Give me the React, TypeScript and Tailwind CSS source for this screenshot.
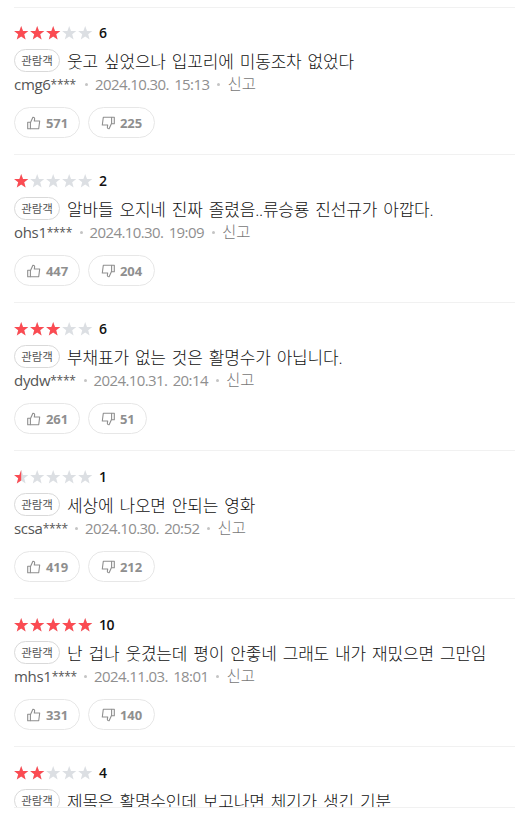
import React from "react";

type Review = {
  score: number;
  text: string;
  user: string;
  userClass: string;
  date: string;
  up?: number;
  down?: number;
};

const reviews: Review[] = [
  { score: 6, text: "웃고 싶었으나 입꼬리에 미동조차 없었다", user: "cmg6", userClass: "w-[81px]", date: "2024.10.30. 15:13", up: 571, down: 225 },
  { score: 2, text: "알바들 오지네 진짜 졸렸음..류승룡 진선규가 아깝다.", user: "ohs1", userClass: "w-[75.5px]", date: "2024.10.30. 19:09", up: 447, down: 204 },
  { score: 6, text: "부채표가 없는 것은 활명수가 아닙니다.", user: "dydw", userClass: "w-[79.5px]", date: "2024.10.31. 20:14", up: 261, down: 51 },
  { score: 1, text: "세상에 나오면 안되는 영화", user: "scsa", userClass: "w-[71px]", date: "2024.10.30. 20:52", up: 419, down: 212 },
  { score: 10, text: "난 겁나 웃겼는데 평이 안좋네 그래도 내가 재밌으면 그만임", user: "mhs1", userClass: "w-[80px]", date: "2024.11.03. 18:01", up: 331, down: 140 },
  { score: 4, text: "제목은 활명수인데 보고나면 체기가 생긴 기분", user: "", userClass: "", date: "" },
];

const STAR = "M7.2 0 L9 4.9 L14.3 5.1 L10.2 8.3 L11.6 13.4 L7.2 10.6 L2.8 13.4 L4.2 8.3 L0.1 5.1 L5.4 4.9 Z";
const HALF_STAR = "M7.2 0 V10.6 L2.8 13.4 L4.2 8.3 L0.1 5.1 L5.4 4.9 Z";

function Star({ fill }: { fill: number }) {
  return (
    <svg width="14" height="14" viewBox="0 0 14 14" className="shrink-0 overflow-visible">
      <path d={STAR} fill="#dcdfe3" />
      {fill === 1 && <path d={STAR} fill="#fb4b52" />}
      {fill === 0.5 && <path d={HALF_STAR} fill="#fb4b52" />}
    </svg>
  );
}

function Thumb({ down = false }: { down?: boolean }) {
  return (
    <svg width="14" height="14" viewBox="0 0 14 14" fill="none" stroke="#8f8f8f" strokeWidth="1.1" strokeLinejoin="round" className={down ? "rotate-180" : ""}>
      <path d="M0.7 6.2H3.4V12.7H0.7Z" />
      <path d="M3.4 6.8L5.9 1.2C7.3 1.1 7.8 2 7.6 3.2L7.3 5H12.7L11.7 12.7H3.4" />
    </svg>
  );
}

function Dot() {
  return <span className="size-[3px] shrink-0 rounded-full bg-[#c4c4c4]" />;
}

function Vote({ count, down }: { count: number; down?: boolean }) {
  return (
    <button className={`flex h-[31px] items-center rounded-full border border-[#e7e7e7] pl-[12px] ${down ? (count > 99 ? "w-[67px]" : "w-[59px]") : "w-[66px]"}`}>
      <Thumb down={down} />
      <span className="ml-[5px] mt-[2px] text-[13px] font-bold leading-none tracking-[-0.1px] text-[#8f8f8f]">{count}</span>
    </button>
  );
}

function Item({ r, first }: { r: Review; first: boolean }) {
  return (
    <li className={`flex shrink-0 flex-col border-t border-[#f1f1f1] ${first ? "h-[147px] pt-[18px]" : "h-[148px] pt-[19px]"}`}>
      <div className="flex h-[14px] items-center gap-[2px]">
        {[0, 1, 2, 3, 4].map((i) => (
          <Star key={i} fill={Math.min(1, Math.max(0, r.score / 2 - i))} />
        ))}
        <span className="ml-[5px] text-[14px] font-semibold leading-none tracking-[-0.4px] text-[#111]">{r.score}</span>
      </div>
      <div className="mt-[9px] flex h-[23px] items-center">
        <span className="flex h-[23px] w-[46px] shrink-0 items-center justify-center rounded-full border border-[#d9d9d9] text-[11.5px] font-normal leading-none text-[#555]">관람객</span>
        <p className="ml-[7px] mt-[2px] whitespace-nowrap text-[17px] font-light leading-none tracking-[-0.18px] text-[#111] [word-spacing:1.8px]">{r.text}</p>
      </div>
      {r.date && (
        <>
          <div className="mt-[3px] flex h-[18px] items-center whitespace-nowrap text-[15px] leading-none text-[#8f8f8f]">
            <span className={`flex items-center ${r.userClass}`}>
              <span className="tracking-[-0.3px] text-[#555]">
                {r.user}
                <span className="align-[1px] text-[12px] leading-none tracking-[-0.3px]">****</span>
              </span>
              <span className="ml-auto mr-[7px] flex"><Dot /></span>
            </span>
            <span className="tracking-[-0.6px] [word-spacing:2px]">{r.date}</span>
            <span className="ml-[8px] mr-[7px] flex"><Dot /></span>
            <span className="mt-[2px] text-[15.5px] font-light text-[#777]">신고</span>
          </div>
          <div className="mt-[14px] flex gap-[8px]">
            <Vote count={r.up!} />
            <Vote count={r.down!} down />
          </div>
        </>
      )}
    </li>
  );
}

export default function App() {
  return (
    <main className="h-[815px] w-[515px] overflow-hidden bg-white pl-[14px] pt-[7px] font-['Open_Sans','Noto_Sans_CJK_KR',sans-serif]">
      <ul className="flex h-[801px] flex-col overflow-hidden border-b border-[#f1f1f1]">
        {reviews.map((r, i) => (
          <Item key={i} r={r} first={i === 0} />
        ))}
      </ul>
    </main>
  );
}
